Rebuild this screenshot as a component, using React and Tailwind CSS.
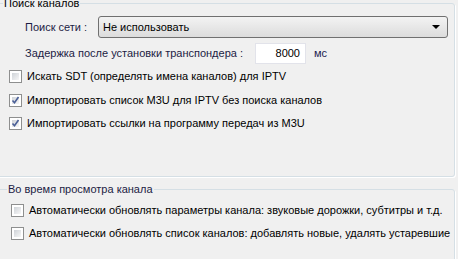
const Checkbox = ({ checked }) => (
  <div className="w-[13px] h-[13px] shrink-0 border border-[#8e8f8f] bg-white p-[2px]">
    <div className="relative w-full h-full bg-gradient-to-br from-[#cfd3d8] to-[#f7f7f7]">
      {checked && (
        <svg
          className="absolute -left-[1px] -top-[1px]"
          width="9"
          height="9"
          viewBox="0 0 9 9"
        >
          <path
            d="M1.5 4.5 L3.5 6.8 L7.5 1"
            fill="none"
            stroke="#4a5f97"
            strokeWidth="1.6"
          />
        </svg>
      )}
    </div>
  </div>
);

const CheckRow = ({ checked, className, children }) => (
  <div className={`flex items-center h-[17px] gap-[5px] ${className}`}>
    <Checkbox checked={checked} />
    <span className="whitespace-nowrap text-black">{children}</span>
  </div>
);

export default function App() {
  return (
    <div className="w-[458px] h-[259px] overflow-hidden bg-[#f0f0f0] font-['Tahoma','Liberation_Sans',sans-serif] text-[11px] leading-[13px]">
      <fieldset className="-mt-[3px] -ml-[3px] w-[458px] h-[180px] border border-[#d5dfe5] rounded-[3px] shadow-[1px_1px_0_#ffffff]">
        <legend className="ml-[5px] px-[1px] text-black leading-[13px]">Поиск каналов</legend>

        {/* сеть */}
        <div className="flex items-center mt-[6px] ml-[27px]">
          <span className="w-[73px] text-[#1c1c44] whitespace-nowrap">Поиск сети :</span>
          <div className="relative flex items-center w-[350px] h-[22px] border border-[#707070] rounded-[3px] bg-gradient-to-b from-[#f3f3f3] to-[#dcdcdc] pl-[4px]">
            <span className="text-black">Не использовать</span>
            <svg className="absolute right-[7px] top-[8px]" width="8" height="4" viewBox="0 0 8 4">
              <path d="M0 0 H8 L4 4 Z" fill="#000" />
            </svg>
          </div>
        </div>

        {/* задержка */}
        <div className="flex items-center mt-[5px] ml-[27px]">
          <span className="w-[230px] text-[#1c1c44] whitespace-nowrap">
            Задержка после установки транспондера :
          </span>
          <div className="w-[51px] h-[21px] border border-[#e2e3ea] bg-white flex items-center justify-end pr-[5px] text-black">
            8000
          </div>
          <span className="ml-[8px] text-[#1c1c50]">мс</span>
        </div>

        <CheckRow className="mt-[4px] ml-[11px]">Искать SDT (определять имена каналов) для IPTV</CheckRow>
        <CheckRow checked className="mt-[7px] ml-[11px]">
          Импортировать список M3U для IPTV без поиска каналов
        </CheckRow>
        <CheckRow checked className="mt-[6px] ml-[11px]">
          Импортировать ссылки на программу передач из M3U
        </CheckRow>
      </fieldset>

      <fieldset className="mt-[6px] -ml-[3px] w-[458px] h-[100px] border border-[#d5dfe5] rounded-[3px] shadow-[1px_1px_0_#ffffff]">
        <legend className="ml-[9px] px-[1px] text-[#1c1c44] leading-[13px]">Во время просмотра канала</legend>
        <CheckRow className="mt-[6px] ml-[13px]">
          Автоматически обновлять параметры канала: звуковые дорожки, субтитры и т.д.
        </CheckRow>
        <CheckRow className="mt-[6px] ml-[13px]">
          Автоматически обновлять список каналов: добавлять новые, удалять устаревшие
        </CheckRow>
      </fieldset>
    </div>
  );
}
